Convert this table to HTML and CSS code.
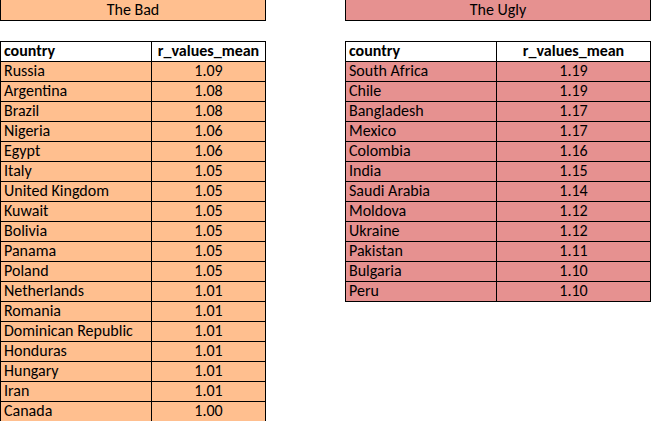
FILE: index.html
```html
<!DOCTYPE html>
<html>
<head>
<meta charset="utf-8">
<link rel="stylesheet" href="styles.css">
</head>
<body>
<div class="page">
  <section class="panel bad">
    <div class="title">The Bad</div>
    <table class="data">
      <thead><tr><th class="c1">country</th><th class="c2">r_values_mean</th></tr></thead>
      <tbody>
        <tr><td class="c1">Russia</td><td class="c2">1.09</td></tr>
        <tr><td class="c1">Argentina</td><td class="c2">1.08</td></tr>
        <tr><td class="c1">Brazil</td><td class="c2">1.08</td></tr>
        <tr><td class="c1">Nigeria</td><td class="c2">1.06</td></tr>
        <tr><td class="c1">Egypt</td><td class="c2">1.06</td></tr>
        <tr><td class="c1">Italy</td><td class="c2">1.05</td></tr>
        <tr><td class="c1">United Kingdom</td><td class="c2">1.05</td></tr>
        <tr><td class="c1">Kuwait</td><td class="c2">1.05</td></tr>
        <tr><td class="c1">Bolivia</td><td class="c2">1.05</td></tr>
        <tr><td class="c1">Panama</td><td class="c2">1.05</td></tr>
        <tr><td class="c1">Poland</td><td class="c2">1.05</td></tr>
        <tr><td class="c1">Netherlands</td><td class="c2">1.01</td></tr>
        <tr><td class="c1">Romania</td><td class="c2">1.01</td></tr>
        <tr><td class="c1">Dominican Republic</td><td class="c2">1.01</td></tr>
        <tr><td class="c1">Honduras</td><td class="c2">1.01</td></tr>
        <tr><td class="c1">Hungary</td><td class="c2">1.01</td></tr>
        <tr><td class="c1">Iran</td><td class="c2">1.01</td></tr>
        <tr><td class="c1">Canada</td><td class="c2">1.00</td></tr>
      </tbody>
    </table>
  </section>
  <section class="panel ugly">
    <div class="title">The Ugly</div>
    <table class="data">
      <thead><tr><th class="c1">country</th><th class="c2">r_values_mean</th></tr></thead>
      <tbody>
        <tr><td class="c1">South Africa</td><td class="c2">1.19</td></tr>
        <tr><td class="c1">Chile</td><td class="c2">1.19</td></tr>
        <tr><td class="c1">Bangladesh</td><td class="c2">1.17</td></tr>
        <tr><td class="c1">Mexico</td><td class="c2">1.17</td></tr>
        <tr><td class="c1">Colombia</td><td class="c2">1.16</td></tr>
        <tr><td class="c1">India</td><td class="c2">1.15</td></tr>
        <tr><td class="c1">Saudi Arabia</td><td class="c2">1.14</td></tr>
        <tr><td class="c1">Moldova</td><td class="c2">1.12</td></tr>
        <tr><td class="c1">Ukraine</td><td class="c2">1.12</td></tr>
        <tr><td class="c1">Pakistan</td><td class="c2">1.11</td></tr>
        <tr><td class="c1">Bulgaria</td><td class="c2">1.10</td></tr>
        <tr><td class="c1">Peru</td><td class="c2">1.10</td></tr>
      </tbody>
    </table>
  </section>
</div>
</body>
</html>
```
FILE: styles.css
```css
html, body {
  margin: 0;
  padding: 0;
  background: #ffffff;
}
body {
  font-family: Carlito, Calibri, Lato, "Liberation Sans", sans-serif;
  font-size: 16px;
  color: #000;
}
.page {
  display: flex;
  align-items: flex-start;
  gap: 79px;
  margin-top: -1px;
}
.panel {
  display: flex;
  flex-direction: column;
}
.bad { width: 266px; }
.ugly { width: 306px; }
.title {
  height: 20px;
  line-height: 19px;
  padding-bottom: 1px;
  box-sizing: content-box;
  height: 19px;
  border: 1px solid #000;
  text-align: center;
}
.bad .title { background: #FFBF8F; }
.ugly .title { background: #E69190; }
.data {
  margin-top: 20px;
  border-collapse: collapse;
  width: 100%;
  table-layout: fixed;
}
.data th, .data td {
  border: 1px solid #000;
  height: 18px;
  padding: 0 3px 1px;
  line-height: 18px;
  white-space: nowrap;
  overflow: hidden;
}
.data th { background: #fff; font-weight: bold; }
.data th.c1 { text-align: left; }
.bad .c1 { width: 144px; }
.ugly .c1 { width: 144px; }
.c2 { text-align: center; }
.bad td { background: #FFBF8F; }
.ugly td { background: #E69190; }
```
